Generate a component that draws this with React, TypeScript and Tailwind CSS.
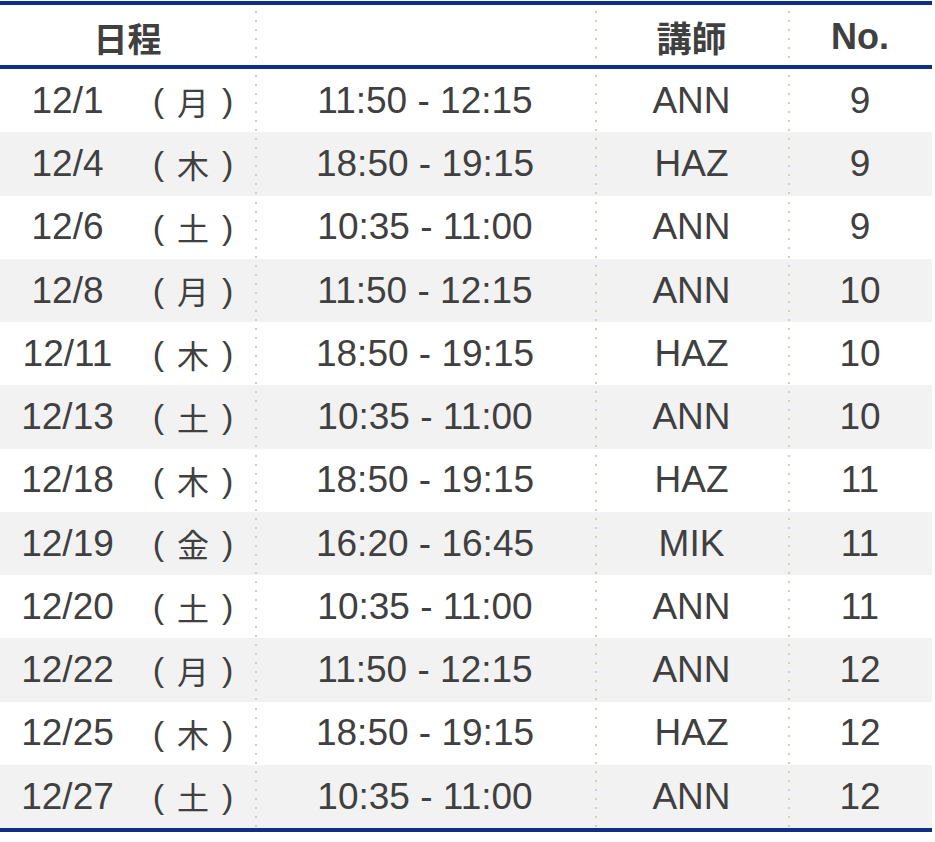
const rows = [
  { date: '12/1', day: '月', time: '11:50 - 12:15', teacher: 'ANN', no: '9' },
  { date: '12/4', day: '木', time: '18:50 - 19:15', teacher: 'HAZ', no: '9' },
  { date: '12/6', day: '土', time: '10:35 - 11:00', teacher: 'ANN', no: '9' },
  { date: '12/8', day: '月', time: '11:50 - 12:15', teacher: 'ANN', no: '10' },
  { date: '12/11', day: '木', time: '18:50 - 19:15', teacher: 'HAZ', no: '10' },
  { date: '12/13', day: '土', time: '10:35 - 11:00', teacher: 'ANN', no: '10' },
  { date: '12/18', day: '木', time: '18:50 - 19:15', teacher: 'HAZ', no: '11' },
  { date: '12/19', day: '金', time: '16:20 - 16:45', teacher: 'MIK', no: '11' },
  { date: '12/20', day: '土', time: '10:35 - 11:00', teacher: 'ANN', no: '11' },
  { date: '12/22', day: '月', time: '11:50 - 12:15', teacher: 'ANN', no: '12' },
  { date: '12/25', day: '木', time: '18:50 - 19:15', teacher: 'HAZ', no: '12' },
  { date: '12/27', day: '土', time: '10:35 - 11:00', teacher: 'ANN', no: '12' },
];

// dotted divider drawn as a repeating background on the cell's left edge
const dotted =
  'bg-[linear-gradient(#d8cfb2_2px,transparent_2px)] bg-[length:2px_9px] bg-repeat-y bg-[position:0_6px]';

export default function App() {
  return (
    <div className="w-[935px] h-[842px] bg-white pt-px font-['Liberation_Sans','Noto_Sans_CJK_JP',sans-serif] text-[#404040]">
      <div className="w-[932px] border-t-4 border-b-4 border-[#0d2f88]">
        {/* header */}
        <div className="grid grid-cols-[135px_120px_340px_193px_144px] h-[64px] border-b-4 border-[#0d2f88] font-bold">
          <div className="col-span-2 flex items-center justify-center pt-1 text-[34px] font-['Noto_Sans_CJK_JP',sans-serif]">
            日程
          </div>
          <div className={dotted} />
          <div className={`${dotted} flex items-center justify-center pt-1 text-[35px] font-['Noto_Sans_CJK_JP',sans-serif]`}>
            講師
          </div>
          <div className={`${dotted} flex items-center justify-center pt-1 text-[36px]`}>No.</div>
        </div>

        {/* body */}
        {rows.map((r, i) => (
          <div
            key={r.date}
            className={`grid grid-cols-[135px_120px_340px_193px_144px] h-[63.25px] text-[37px] ${
              i % 2 === 1 ? 'bg-[#f2f2f2]' : 'bg-white'
            }`}
          >
            <div className="flex items-center justify-center">{r.date}</div>
            <div className="flex items-center justify-center pr-1 text-[34px] gap-[13px]">
              <span>(</span>
              <span className="font-['Noto_Sans_CJK_JP',sans-serif] text-[32px]">{r.day}</span>
              <span>)</span>
            </div>
            <div className={`${dotted} flex items-center justify-center`}>{r.time}</div>
            <div className={`${dotted} flex items-center justify-center`}>{r.teacher}</div>
            <div className={`${dotted} flex items-center justify-center`}>{r.no}</div>
          </div>
        ))}
      </div>
    </div>
  );
}
